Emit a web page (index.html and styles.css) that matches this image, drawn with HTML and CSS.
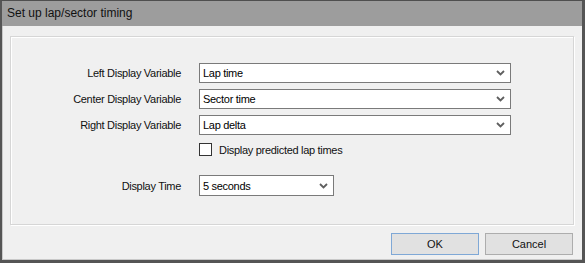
FILE: index.html
```html
<!DOCTYPE html>
<html>
<head>
    <link rel="stylesheet" href="styles.css">
</head>
<body>
    <div class="window">
        <div class="titlebar">Set up lap/sector timing</div>
        <div class="client">
            <!-- Settings group -->
            <div class="panel">
                <div class="field">
                    <label class="caption">Left Display Variable</label>
                    <div class="combo wide"><span>Lap time</span>
                        <svg class="chev" width="9" height="6" viewBox="0 0 9 6"><polyline points="1,1 4.5,4.5 8,1" /></svg>
                    </div>
                </div>
                <div class="field">
                    <label class="caption">Center Display Variable</label>
                    <div class="combo wide"><span>Sector time</span>
                        <svg class="chev" width="9" height="6" viewBox="0 0 9 6"><polyline points="1,1 4.5,4.5 8,1" /></svg>
                    </div>
                </div>
                <div class="field">
                    <label class="caption">Right Display Variable</label>
                    <div class="combo wide"><span>Lap delta</span>
                        <svg class="chev" width="9" height="6" viewBox="0 0 9 6"><polyline points="1,1 4.5,4.5 8,1" /></svg>
                    </div>
                </div>
                <div class="check-row">
                    <span class="box"></span>
                    <span>Display predicted lap times</span>
                </div>
                <div class="field time-field">
                    <label class="caption">Display Time</label>
                    <div class="combo short"><span>5 seconds</span>
                        <svg class="chev" width="9" height="6" viewBox="0 0 9 6"><polyline points="1,1 4.5,4.5 8,1" /></svg>
                    </div>
                </div>
            </div>

            <!-- Dialog buttons -->
            <div class="buttons">
                <button class="btn default">OK</button>
                <button class="btn">Cancel</button>
            </div>
        </div>
    </div>
</body>
</html>
```

FILE: styles.css
```css
html, body {
    margin: 0;
    padding: 0;
    background: #f0f0f0;
}

.window {
    width: 585px;
    height: 263px;
    box-sizing: border-box;
    border-top: 1px solid #4f4f4f;
    border-left: 2px solid #555555;
    border-right: 3px solid #555555;
    border-bottom: 3px solid #555555;
    font-family: "Liberation Sans", Arial, sans-serif;
    font-size: 11px;
    color: #000;
    display: flex;
    flex-direction: column;
}

.titlebar {
    height: 25px;
    line-height: 24px;
    background: #9d9d9d;
    padding-left: 5px;
    font-size: 12px;
    color: #111;
}

.client {
    flex: 1;
    background: #f0f0f0;
    padding: 10px 8px 0 8px;
    box-shadow: inset 1px 0 0 #c9c9c9, inset 0 -1px 0 #c9c9c9;
    letter-spacing: -0.3px;
}

.panel {
    height: 189px;
    box-sizing: border-box;
    border: 1px solid #d6d6d6;
    box-shadow: inset 1px 1px 0 #fff, 1px 1px 0 #fff;
    padding-top: 26px;
    display: flex;
    flex-direction: column;
}

.field {
    display: flex;
    align-items: center;
    height: 20px;
    margin-bottom: 6px;
}

.caption {
    width: 170px;
    text-align: right;
    margin-right: 18px;
    color: #111;
}

.combo {
    height: 20px;
    box-sizing: border-box;
    background: #fff;
    border: 1px solid #7a7a7a;
    display: flex;
    align-items: center;
    justify-content: space-between;
    padding: 0 4px 0 3px;
}

.wide {
    width: 312px;
}

.short {
    width: 135px;
    height: 21px;
}

.chev {
    margin-right: 1px;
}

.chev polyline {
    fill: none;
    stroke: #5f5f5f;
    stroke-width: 1.8;
}

.check-row {
    display: flex;
    align-items: center;
    height: 13px;
    margin-top: 2px;
    padding-left: 188px;
    color: #111;
}

.box {
    width: 13px;
    height: 13px;
    box-sizing: border-box;
    border: 1px solid #333;
    background: #fff;
    margin-right: 7px;
}

.time-field {
    margin-top: 19px;
    height: 21px;
}

.buttons {
    display: flex;
    justify-content: flex-end;
    gap: 6px;
    margin-top: 8px;
    padding-right: 1px;
}

.btn {
    width: 88px;
    height: 22px;
    background: #e1e1e1;
    border: 1px solid #adadad;
    font-family: "Liberation Sans", Arial, sans-serif;
    font-size: 11px;
    color: #111;
    padding: 0;
}

.default {
    border-color: #7fa8d6;
}
```
